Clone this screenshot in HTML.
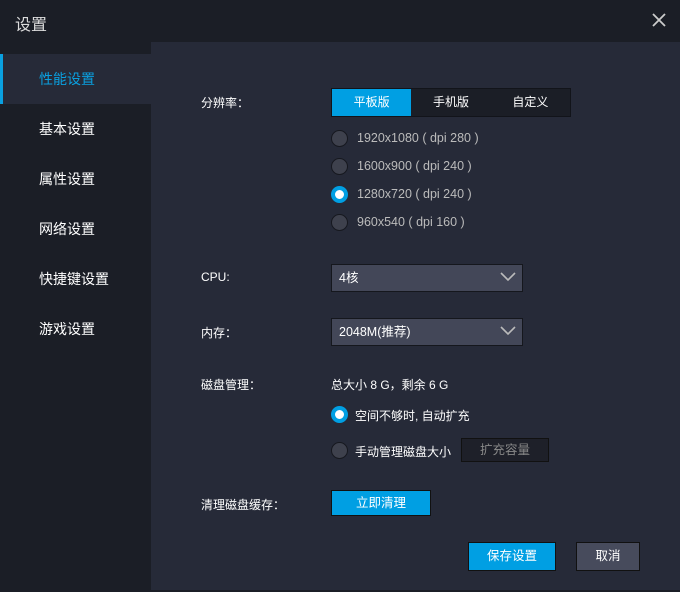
<!DOCTYPE html>
<html><head><meta charset="utf-8"><style>
*{margin:0;padding:0;box-sizing:border-box}
body{width:680px;height:592px;background:#1b1e26;font-family:"Liberation Sans","Noto Sans CJK SC",sans-serif;font-size:13px;color:#fff;position:relative;overflow:hidden}
.a{position:absolute}
.title{left:15px;top:11px;font-size:16px;color:#ddd}
.panel{left:151px;top:42px;width:529px;height:548px;background:#262a38}
.nav{left:0;width:151px;height:50px;line-height:50px;padding-left:39px;font-size:14px}
.act{background:#262a38;color:#0aa0e0;border-left:3px solid #0aa0e0;padding-left:36px}
.lbl{font-size:12px;color:#fff}
.seg{left:331px;top:88px;width:240px;height:29px;background:#1b1e26;border:1px solid #12141a;display:flex}
.seg div{flex:1;text-align:center;line-height:27px;font-size:12px}
.seg .on{background:#009fe3}
.r{width:17px;height:17px;border-radius:50%;background:#3e414d;border:1px solid #16181f}
.r.on{background:#fff;border:4px solid #009fe3}
.rt{font-size:12.5px;color:#bbb}
.dd{left:331px;width:192px;height:28px;background:#434758;border:1px solid #15171d;font-size:12.5px;line-height:26px;padding-left:7px}
.btn{text-align:center;font-size:12.5px;border:1px solid #111}
</style></head><body>
<div class="a title">设置</div>
<svg class="a" style="left:651px;top:12px" width="16" height="16"><path d="M2 2L14 14M14 2L2 14" stroke="#ccc" stroke-width="1.8"/></svg>
<div class="a panel"></div>
<div class="a nav act" style="top:54px">性能设置</div>
<div class="a nav" style="top:104px">基本设置</div>
<div class="a nav" style="top:154px">属性设置</div>
<div class="a nav" style="top:204px">网络设置</div>
<div class="a nav" style="top:254px">快捷键设置</div>
<div class="a nav" style="top:304px">游戏设置</div>

<div class="a lbl" style="left:201px;top:94px">分辨率：</div>
<div class="a seg"><div class="on">平板版</div><div>手机版</div><div>自定义</div></div>
<div class="a r" style="left:331px;top:130px"></div><div class="a rt" style="left:357px;top:131px">1920x1080 ( dpi 280 )</div>
<div class="a r" style="left:331px;top:158px"></div><div class="a rt" style="left:357px;top:159px">1600x900 ( dpi 240 )</div>
<div class="a r on" style="left:331px;top:186px"></div><div class="a rt" style="left:357px;top:187px">1280x720 ( dpi 240 )</div>
<div class="a r" style="left:331px;top:214px"></div><div class="a rt" style="left:357px;top:215px">960x540 ( dpi 160 )</div>

<div class="a lbl" style="left:201px;top:270px">CPU:</div>
<div class="a dd" style="top:264px">4核</div>
<svg class="a" style="left:500px;top:272px" width="16" height="10"><path d="M1 1L8 8L15 1" stroke="#bbb" stroke-width="1.6" fill="none"/></svg>
<div class="a lbl" style="left:201px;top:324px">内存：</div>
<div class="a dd" style="top:318px">2048M(推荐)</div>
<svg class="a" style="left:500px;top:326px" width="16" height="10"><path d="M1 1L8 8L15 1" stroke="#bbb" stroke-width="1.6" fill="none"/></svg>

<div class="a lbl" style="left:201px;top:376px">磁盘管理：</div>
<div class="a lbl" style="left:331px;top:376px">总大小 8 G，剩余 6 G</div>
<div class="a r on" style="left:331px;top:406px"></div><div class="a lbl" style="left:355px;top:407px">空间不够时, 自动扩充</div>
<div class="a r" style="left:331px;top:442px"></div><div class="a lbl" style="left:355px;top:443px">手动管理磁盘大小</div>
<div class="a btn" style="left:461px;top:438px;width:88px;height:24px;line-height:22px;background:#1e2029;color:#888">扩充容量</div>

<div class="a lbl" style="left:201px;top:496px">清理磁盘缓存：</div>
<div class="a btn" style="left:331px;top:490px;width:100px;height:26px;line-height:24px;background:#009fe3">立即清理</div>
<div class="a btn" style="left:468px;top:542px;width:88px;height:29px;line-height:27px;background:#009fe3">保存设置</div>
<div class="a btn" style="left:576px;top:542px;width:64px;height:29px;line-height:27px;background:#474b5c">取消</div>
</body></html>
